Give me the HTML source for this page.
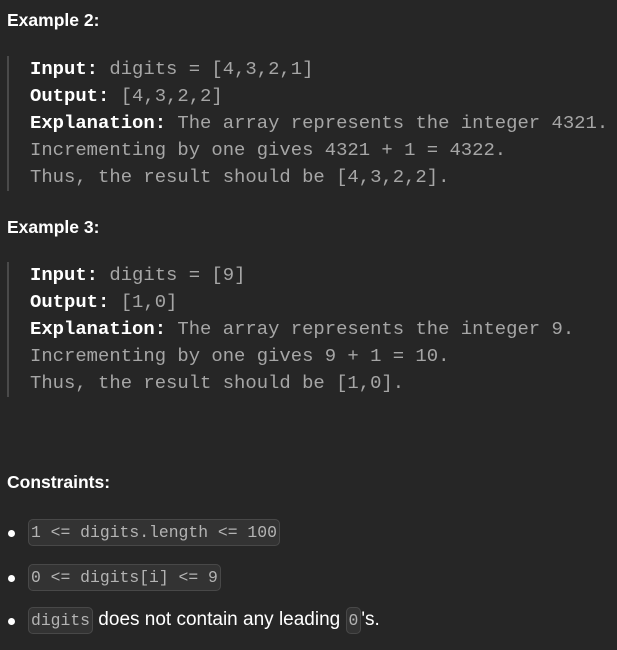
<!DOCTYPE html>
<html><head><style>
body{margin:0;width:617px;height:650px;background:#262626;overflow:hidden;font-family:"Liberation Sans",sans-serif;color:#eee;position:relative}
.h{position:absolute;left:7px;font-weight:bold;font-size:17.5px;color:#fff}
.pre{position:absolute;left:7px;border-left:2px solid #4a4a4a;padding-left:21px;font-family:"Liberation Mono",monospace;font-size:18.9px;line-height:27px;color:#a6a6a6;white-space:pre}
.pre b{color:#fff}
.li{position:absolute;left:8px;font-size:19px;color:#fff;white-space:pre}
.li::before{content:"";position:absolute;left:0;top:9px;width:7px;height:7px;border-radius:50%;background:#fff}
code{font-family:"Liberation Mono",monospace;font-size:16.4px;color:#b4b4b4;background:#333;border:1px solid #484848;border-radius:5px;padding:3px 2px;margin-left:20px}
code.s{margin-left:0}
</style></head><body>
<div class="h" style="top:10px">Example 2:</div>
<div class="pre" style="top:56px"><b>Input:</b> digits = [4,3,2,1]
<b>Output:</b> [4,3,2,2]
<b>Explanation:</b> The array represents the integer 4321.
Incrementing by one gives 4321 + 1 = 4322.
Thus, the result should be [4,3,2,2].</div>
<div class="h" style="top:217px">Example 3:</div>
<div class="pre" style="top:262px"><b>Input:</b> digits = [9]
<b>Output:</b> [1,0]
<b>Explanation:</b> The array represents the integer 9.
Incrementing by one gives 9 + 1 = 10.
Thus, the result should be [1,0].</div>
<div class="h" style="top:472px">Constraints:</div>
<div class="li" style="top:521px"><code>1 &lt;= digits.length &lt;= 100</code></div>
<div class="li" style="top:566px"><code>0 &lt;= digits[i] &lt;= 9</code></div>
<div class="li" style="top:609px"><code>digits</code> does not contain any leading <code class="s">0</code>'s.</div>
</body></html>
